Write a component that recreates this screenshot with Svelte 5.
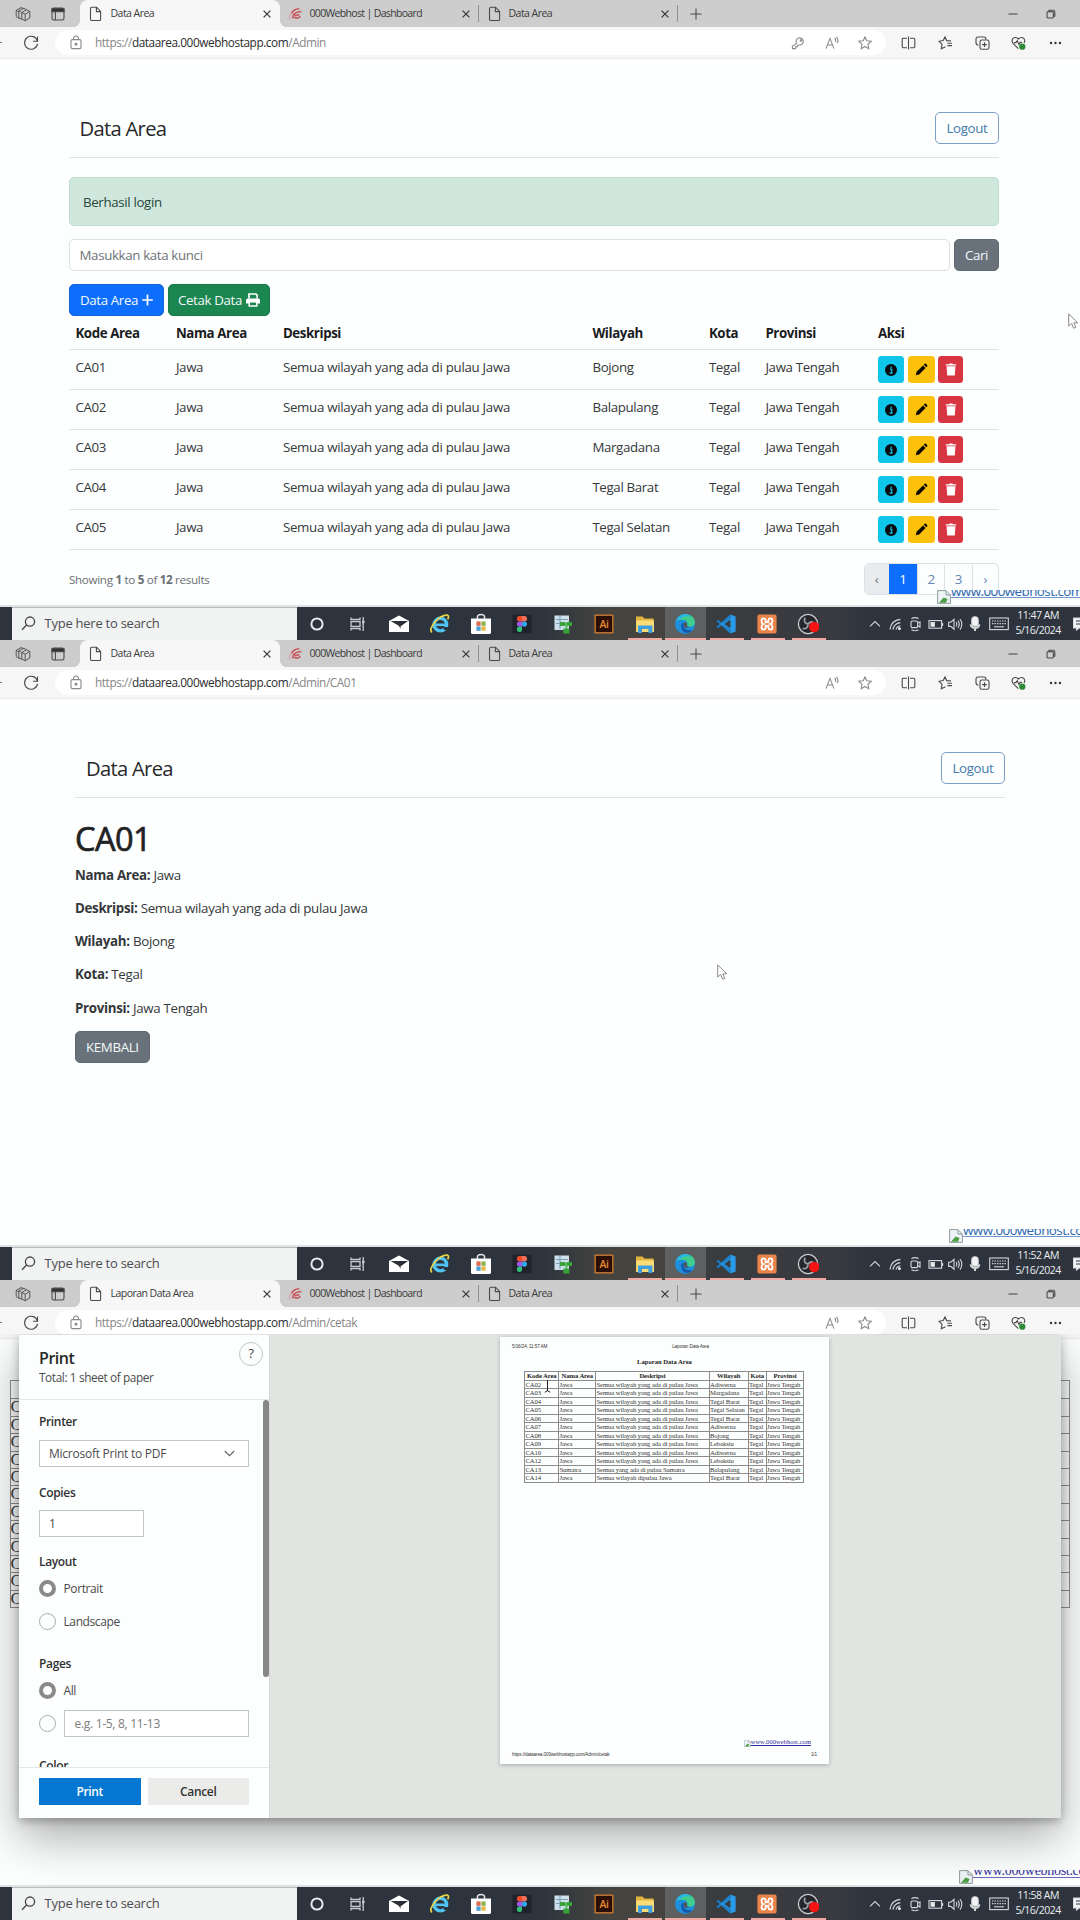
<script>
  const wilayah = ['Bojong', 'Balapulang', 'Margadana', 'Tegal Barat', 'Tegal Selatan'];
  const rows = wilayah.map((w, i) => ({ kode: 'CA0' + (i + 1), wilayah: w }));
  const desc = 'Semua wilayah yang ada di pulau Jawa';

  const details = [
    ['Nama Area:', 'Jawa'],
    ['Deskripsi:', desc],
    ['Wilayah:', 'Bojong'],
    ['Kota:', 'Tegal'],
    ['Provinsi:', 'Jawa Tengah']
  ];

  const report = [
    ['CA02', 'Jawa', desc, 'Adiwerna'],
    ['CA03', 'Jawa', desc, 'Margadana'],
    ['CA04', 'Jawa', desc, 'Tegal Barat'],
    ['CA05', 'Jawa', desc, 'Tegal Selatan'],
    ['CA06', 'Jawa', desc, 'Tegal Barat'],
    ['CA07', 'Jawa', desc, 'Adiwerna'],
    ['CA08', 'Jawa', desc, 'Bojong'],
    ['CA09', 'Jawa', desc, 'Lebaksiu'],
    ['CA10', 'Jawa', desc, 'Adiwerna'],
    ['CA12', 'Jawa', desc, 'Lebaksiu'],
    ['CA13', 'Sumatra', 'Semua yang ada di pulau Sumatra', 'Balapulang'],
    ['CA14', 'Jawa', 'Semua wilayah dipulau Jawa', 'Tegal Barat']
  ];

  const apps = [
    ['cortana', ''], ['taskview', ''], ['mail', ''], ['ie', ''], ['store', ''], ['figma', ''],
    ['sheet', ''], ['ai', ''], ['folder', 'open'], ['edge', 'open current'], ['code', 'open'],
    ['xampp', 'open'], ['obs', 'open']
  ];
  const tray = ['chevron', 'wifi', 'camera', 'battery', 'volume', 'mic'];
</script>

{#snippet doc()}
  <svg class="doc" width="13" height="16" viewBox="0 0 13 16"><path d="M1.5 2.5q0-1.3 1.3-1.3H7.6L11.6 5.4V13.2q0 1.3-1.3 1.3H2.8q-1.3 0-1.3-1.3ZM7.4 1.4V5.6H11.4" /></svg>
{/snippet}

{#snippet close()}
  <svg class="close" width="10" height="10" viewBox="0 0 10 10"><path d="M1.6 1.6L8.4 8.4M8.4 1.6L1.6 8.4" /></svg>
{/snippet}

{#snippet browser(title, path, withKey)}
  <header class="tabs">
    <div class="lead">
      <svg class="cubes" width="16" height="16" viewBox="0 0 16 16"><path d="M1.2 4.4V10.6L4.4 12.6M1.2 4.4L6 1.6L8.6 2.6M1.2 4.4L3.4 5.6M3.8 5V11.6L6.8 13.4M3.8 5L8.6 2.4L11.6 3.6M3.8 5L6.4 6.4M6.8 6.6V13L10.2 14.8L14.8 12V5.4L11.4 3.8ZM6.8 6.6L10.2 8.2L14.8 5.4M10.2 8.2V14.8" /></svg>
      <svg width="16" height="16" viewBox="0 0 16 16"><rect x="2" y="2" width="12" height="12" rx="1.8" /><path class="fill" d="M2 2.5H14V5.8H2Z" /><path d="M5.4 5V14" /></svg>
    </div>
    <div class="tab active">{@render doc()}<span>{title}</span>{@render close()}</div>
    <div class="tab host">
      <svg width="15" height="14" viewBox="0 0 15 14"><path class="red pale" d="M2.2 12.5Q.6 9 3 6.4" /><path class="red" d="M3.4 6.4Q5.4 2 11.4 1.8M4.6 11.4Q4.2 5.2 13.4 4.6M5.8 9.8Q8.8 12.8 12.4 9.4M6.4 7.8Q8 9.4 11.4 7.4" /></svg>
      <span>000Webhost | Dashboard</span>{@render close()}
    </div>
    <div class="tab">{@render doc()}<span>Data Area</span>{@render close()}</div>
    <svg class="plus" width="12" height="12" viewBox="0 0 12 12"><path d="M6 .5V11.5M.5 6H11.5" /></svg>
    <div class="window">
      <svg width="10" height="10" viewBox="0 0 10 10"><path d="M.5 5H9.5" /></svg>
      <svg width="10" height="10" viewBox="0 0 10 10"><rect x="1" y="2.6" width="6.4" height="6.4" rx="1.2" /><path d="M3 2.4V1.2H7.2Q8.8 1.2 8.8 2.8V7.2H7.6" /></svg>
    </div>
  </header>
  <div class="toolbar">
    <i class="back"></i>
    <svg width="18" height="18" viewBox="0 0 18 18"><path d="M15.4 7.2A6.5 6.5 0 1 0 15.5 9.8M15.5 2.6V7.2H11" /></svg>
    <div class="address">
      <svg width="12" height="15" viewBox="0 0 12 15"><rect x="1" y="4.6" width="10" height="9" rx="1.3" /><path d="M3.6 4.6V3.4a2.4 2.4 0 0 1 4.8 0V4.6" /><circle class="fill" cx="6" cy="9.2" r=".9" /></svg>
      <span class="url">https://<b>dataarea.000webhostapp.com</b>{path}</span>
      <div class="inpill">
        {#if withKey}
          <svg width="14" height="14" viewBox="0 0 14 14"><path d="M5.6 7.4A3.6 3.6 0 1 1 8 9L6.4 9.4V10.8H4.6V12.6H1.4V10.4Z" /><circle cx="9.9" cy="4.4" r=".7" /></svg>
        {/if}
        <svg width="14" height="14" viewBox="0 0 14 14"><path d="M1 12.6L5 2.4L9 12.6M2.4 9H7.6M9.6 2Q11.4 3.6 10.4 6M11.4 .8Q14 3.4 12.4 7" /></svg>
        <svg width="14" height="14" viewBox="0 0 14 14"><path d="M7 .9L8.8 4.8L13.2 5.3L10 8.3L10.8 12.7L7 10.5L3.2 12.7L4 8.3L.8 5.3L5.2 4.8Z" /></svg>
      </div>
    </div>
    <div class="actions">
      <svg width="15" height="14" viewBox="0 0 15 14"><path d="M6 2.2H2.4Q1.2 2.2 1.2 3.4V10.6Q1.2 11.8 2.4 11.8H6M9 2.2H12.6Q13.8 2.2 13.8 3.4V10.6Q13.8 11.8 12.6 11.8H9M7.5 .5V13.5" /></svg>
      <svg width="15" height="14" viewBox="0 0 15 14"><path d="M13 4.9L8.7 4.6L7 .9L5.2 4.6L1 5.3L4 8.3L3.3 12.7L7.4 10.7M9.4 7.2H14M9.4 9.6H14" /></svg>
      <svg width="15" height="14" viewBox="0 0 15 14"><path d="M11 3.4Q11 1 9 1H3Q1 1 1 3V6.4Q1 9 3.4 9" /><rect x="5" y="4" width="9" height="9.3" rx="1.8" /><path d="M9.5 6.2V11M7.1 8.6H11.9" /></svg>
      <svg width="15" height="14" viewBox="0 0 15 14"><path d="M7.4 12.6L2 7.3Q.2 4.8 1.8 2.7Q4.4 .2 7.4 3Q10.4 .2 13 2.7Q14.4 4.8 13 7M3 6.6H5L6.2 4.6L8 8.6L9.2 6.4H11" /><circle class="ok" cx="11.3" cy="10.7" r="3.1" /></svg>
      <svg width="15" height="14" viewBox="0 0 15 14"><g class="fill dots"><circle cx="3" cy="7" r="1.2" /><circle cx="7.5" cy="7" r="1.2" /><circle cx="12" cy="7" r="1.2" /></g></svg>
    </div>
  </div>
{/snippet}

{#snippet app(name)}
  <svg width="22" height="22" viewBox="0 0 22 22">
    {#if name === 'cortana'}
      <circle cx="11" cy="11" r="5.6" fill="none" stroke="#e6e8ea" stroke-width="2" />
    {:else if name === 'taskview'}
      <g fill="none" stroke="#c9ccd0" stroke-width="1.3"><path d="M4 4.5V6.5H13V4.5M4 17.5V15.5H13V17.5M16.2 4V18" /><rect x="4" y="8.6" width="9" height="4.8" /><path d="M15 9H17.6" stroke-width="2.4" /></g>
    {:else if name === 'mail'}
      <path d="M1 8L11 2.4L21 8V19H1Z" fill="#fff" /><path d="M2.6 8H20L12.4 13.4Q13 16 13.6 16.6L10.4 12.4Z" fill="#2b2f36" />
    {:else if name === 'ie'}
      <circle cx="11.4" cy="11.6" r="6.3" fill="none" stroke="#4fc3f3" stroke-width="3.4" /><path d="M7 11.8H19" stroke="#4fc3f3" stroke-width="2.6" /><path d="M14 14H20V17H15Z" fill="#2e343d" /><path d="M3 19.4Q-.4 17 6 9Q13 1.4 18.5 2.2Q20.4 3 18.6 6.4" fill="none" stroke="#e6d34a" stroke-width="1.7" />
    {:else if name === 'store'}
      <path d="M7.4 7V4.4Q7.4 1.4 11 1.4T14.6 4.4V7" fill="none" stroke="#dfe3e6" stroke-width="1.5" /><path d="M1 5.6H21V19.4Q21 21 19.4 21H2.6Q1 21 1 19.4Z" fill="#fff" /><path d="M6.4 8.4H10.6V12.8H6.4Z" fill="#e06a4c" /><path d="M11.4 8.4H15.6V12.8H11.4Z" fill="#8bb34a" /><path d="M6.4 13.4H10.6V17.8H6.4Z" fill="#4a9fdd" /><path d="M11.4 13.4H15.6V17.8H11.4Z" fill="#eab843" />
    {:else if name === 'figma'}
      <rect x="1.5" y="1.5" width="19" height="19" rx="2" fill="#20242a" /><path d="M11 3H8.6a2.7 2.7 0 0 0 0 5.4H11Z" fill="#ee4b2c" /><path d="M11 3H13.4a2.7 2.7 0 0 1 0 5.4H11Z" fill="#f0705c" /><path d="M11 8.4H8.6a2.7 2.7 0 0 0 0 5.4H11Z" fill="#9a5bea" /><circle cx="13.4" cy="11.1" r="2.6" fill="#35a9ee" /><path d="M11 13.8H8.8a2.6 2.6 0 1 0 2.2 2.6Z" fill="#2fbf76" />
    {:else if name === 'sheet'}
      <path d="M2.5 2.5H17V17H2.5Z" fill="#cfe0ea" /><path d="M4 6.5H16M4 10.5H12M8 3V16" stroke="#7ba3bb" stroke-width="1.2" /><path d="M8 9H13.4V13H8ZM14.6 9H20V13H14.6ZM11.4 15.6H17.4V20.6H11.4Z" fill="#37a23c" /><path d="M13 11H15M14.4 12V16" stroke="#52b955" stroke-width="2" />
    {:else if name === 'ai'}
      <rect x="2.2" y="2.2" width="17.6" height="17.6" fill="#2a0f06" stroke="#c8792f" stroke-width="1.4" /><text x="11" y="15" text-anchor="middle" fill="#e88b35" font-size="10.5" font-weight="600">Ai</text>
    {:else if name === 'folder'}
      <path d="M2 3.4H8.5L10.4 5.4H19.6V19H2Z" fill="#e3b33d" /><path d="M2.4 7.4H20V19H2.4Z" fill="#f9dd7b" /><path d="M4 12.6H18.4V20H14.4V16H8V20H4Z" fill="#3f9fe0" />
    {:else if name === 'edge'}
      <circle cx="11" cy="11" r="10" fill="#1f8fdc" /><path d="M2 8Q5 .8 12 1Q20.6 2 21 9.6Q20.6 14 16 13.6Q12 13.2 13.4 10.8Q13 7 8 6.8Q4 6.8 2 8Z" fill="#3fce8e" /><path d="M1.4 8.4Q4 1.6 11 1Q15 1.4 17.4 4Q9 1.6 6 6.6Q3.6 7 1.4 8.4Z" fill="#29b4e6" /><path d="M7.4 11Q6.4 16 10.6 19.6Q14.4 20.6 18.6 17.4Q13 18 10.6 15.4Q9 13 9.6 10Q8 10 7.4 11Z" fill="#1257a8" /><path d="M9.8 9.6Q12.6 8.6 13.2 11Q12.2 13.4 15 14.2Q11.4 15.6 10 13.4Z" fill="#525456" />
    {:else if name === 'code'}
      <path d="M15.4 1.4L20.6 3.6V18.4L15.4 20.6L5 11Z" fill="#2a9be8" /><path d="M15.4 6.4V15.6L9.4 11Z" fill="#3a3d42" /><path d="M1.4 8.2L3 6.8L16 17.2V20.4ZM1.4 13.8L3 15.2L16 4.8V1.6Z" fill="#1a7fc8" />
    {:else if name === 'xampp'}
      <rect x="1.4" y="1.4" width="19.2" height="19.2" rx="2" fill="#ea8448" /><path d="M5.6 8.4V7Q5.6 5.4 7.4 5.4Q9.6 5.4 9.6 7.4V9H12.4V7.4Q12.4 5.4 14.6 5.4Q16.4 5.4 16.4 7V8.4Q16.4 10.4 14.4 11Q16.4 11.6 16.4 13.6V15Q16.4 16.6 14.6 16.6Q12.4 16.6 12.4 14.6V13H9.6V14.6Q9.6 16.6 7.4 16.6Q5.6 16.6 5.6 15V13.6Q5.6 11.6 7.6 11Q5.6 10.4 5.6 8.4Z" fill="none" stroke="#fff" stroke-width="1.8" />
    {:else if name === 'obs'}
      <circle cx="11" cy="11" r="9.6" fill="#24262b" stroke="#c9cbce" stroke-width="1.3" /><path d="M11 11Q6 10 8 4.6M11 11Q14.6 7 17.6 11M11 11Q11 16.4 5.6 15.6" fill="none" stroke="#9b9da1" stroke-width="1.8" /><circle cx="17.2" cy="14" r="5.2" fill="#f81414" />
    {/if}
  </svg>
{/snippet}

{#snippet trayIcon(name)}
  <svg width="18" height="18" viewBox="0 0 18 18">
    {#if name === 'chevron'}
      <path d="M4 11.4L9 6.6L14 11.4" />
    {:else if name === 'wifi'}
      <path d="M4 14.6Q5 5.4 14.4 4.4M7 14.6Q7.8 8.6 14.4 7.6M10 14.6Q10.8 11.2 14.4 10.8" /><circle class="fill" cx="13.4" cy="13.6" r="1" />
    {:else if name === 'camera'}
      <rect x="5" y="6" width="6.6" height="6.6" rx="1" /><path d="M11.6 8L14 6.8V12L11.6 10.8M5.4 3.6Q9 1.6 12.6 3.6M5.4 14.8Q9 16.8 12.6 14.8" />
    {:else if name === 'battery'}
      <rect x="3" y="5.6" width="12.6" height="7.6" /><path class="fill" d="M5 7.6H8.4V11.2H5Z" /><path d="M16.6 8V11" />
    {:else if name === 'volume'}
      <path d="M2.6 7.2H4.8L8 4.4V14.2L4.8 11.4H2.6ZM10 7.2Q11.6 9.2 10 11.4M12 5.6Q14.6 9.2 12 13M14 4Q17.6 9.2 14 14.6" />
    {:else if name === 'mic'}
      <rect class="fill" x="5.8" y="1.8" width="6.4" height="9.4" rx="3" /><path d="M4.6 9.4Q5.2 13 9 13T13.4 9.4M9 13V16" stroke-width="2" />
    {/if}
  </svg>
{/snippet}

{#snippet broken(width)}
  <svg width={width} height={width} viewBox="0 0 14 14"><path d="M.6 .6H9L13.4 5V13.4H.6Z" fill="#eef3f5" stroke="#8f9a9d" /><path d="M2 12.8L6.6 7.6L10.6 9L9 12.8Z" fill="#4e9f45" /><path d="M9 .8V5H13.2" fill="none" stroke="#8f9a9d" /></svg>
{/snippet}

{#snippet taskbar(time)}
  <footer class="taskbar">
    <div class="search">
      <svg width="15" height="15" viewBox="0 0 15 15"><circle cx="9" cy="5.6" r="4.6" /><path d="M5.6 9L1 13.8" /></svg>
      <span>Type here to search</span>
    </div>
    {#each apps as [name, state]}
      <div class="app {state}">{@render app(name)}</div>
    {/each}
    <div class="tray">
      {#each tray as name}<span class="cell">{@render trayIcon(name)}</span>{/each}
      <svg class="keyboard" width="20" height="14" viewBox="0 0 20 14"><rect x=".7" y="1" width="18.6" height="11.6" /><path stroke-dasharray="1.4 1.1" d="M3 4H17.4M3 6.6H17.4" /><path d="M5 9.8H15" /></svg>
      <div class="clock"><span>{time}</span><span>5/16/2024</span></div>
      <svg class="notes" width="12" height="14" viewBox="0 0 12 14"><path class="fill" d="M.5 1H12V11H6L3.6 13V11H.5Z" /><path class="dark" d="M3 4H12M3 7H12" /></svg>
    </div>
  </footer>
{/snippet}

<main>
  <section class="frame">
    {@render browser('Data Area', '/Admin', true)}
    <div class="page list">
      <div class="head"><span class="brand">Data Area</span><button class="btn outline">Logout</button></div>
      <div class="alert">Berhasil login</div>
      <div class="find"><div class="keyword">Masukkan kata kunci</div><button class="btn gray">Cari</button></div>
      <div class="tools">
        <button class="btn blue">Data Area <svg width="11" height="12" viewBox="0 0 11 12"><path d="M5.5 .6V11.4M.2 6H10.8" stroke="#fff" stroke-width="1.7" /></svg></button>
        <button class="btn green">Cetak Data <svg width="14" height="14" viewBox="0 0 14 14"><path d="M3 5.4V1H10L11.2 2.4V5.4" fill="none" stroke="#fff" stroke-width="1.7" /><path d="M1.6 5.4H12.4Q14 5.4 14 7V10.6H0V7Q0 5.4 1.6 5.4Z" fill="#fff" /><rect x="3.2" y="8.8" width="7.6" height="4.2" fill="#1b8650" stroke="#fff" stroke-width="1.5" /></svg></button>
      </div>
      <div class="grid">
        <div class="tr th"><span>Kode Area</span><span>Nama Area</span><span>Deskripsi</span><span>Wilayah</span><span>Kota</span><span>Provinsi</span><span>Aksi</span></div>
        {#each rows as r}
          <div class="tr">
            <span>{r.kode}</span><span>Jawa</span><span class="desc">{desc}</span><span>{r.wilayah}</span><span>Tegal</span><span>Jawa Tengah</span>
            <div class="acts">
              <i class="info"><svg width="12" height="12" viewBox="0 0 12 12"><circle cx="6" cy="6" r="6" fill="#05090b" /><path d="M5 5.2H6.6V9M4.6 9H7.6M6.1 2.4V4" fill="none" stroke="#12b6d6" stroke-width="1.4" /></svg></i>
              <i class="edit"><svg width="13" height="13" viewBox="0 0 13 13"><path d="M.8 12.2L1.6 8.8L8 2.4L10.6 5L4.2 11.4ZM8.7 1.7L9.6 .8Q10.4 .2 11.2 .9L12.1 1.8Q12.8 2.6 12.1 3.4L11.3 4.3Z" fill="#0d0b00" /></svg></i>
              <i class="del"><svg width="12" height="13" viewBox="0 0 12 13"><path d="M.8 1.2H4L4.6 .4H7.4L8 1.2H11.2V2.4H.8ZM1.6 3.2H10.4L9.8 12.6H2.2Z" fill="#fff" /></svg></i>
            </div>
          </div>
        {/each}
      </div>
      <div class="foot">
        <span>Showing <b>1</b> to <b>5</b> of <b>12</b> results</span>
        <div class="pages"><i class="off">‹</i><i class="on">1</i><i>2</i><i>3</i><i class="next">›</i></div>
      </div>
      <svg class="pointer p1" width="11" height="17" viewBox="0 0 11 17"><path d="M.7 .9V13L3.6 10.4L5.6 15.2L7.8 14.3L5.8 9.8H9.8Z" /></svg>
      <div class="mark m1">{@render broken(14)}<div class="clip"><span>www.000webhost.com</span></div></div>
    </div>
    {@render taskbar('11:47 AM')}
  </section>

  <section class="frame">
    {@render browser('Data Area', '/Admin/CA01', false)}
    <div class="page detail">
      <div class="head"><span class="brand">Data Area</span><button class="btn outline">Logout</button></div>
      <h1>CA01</h1>
      {#each details as [k, v]}<p><b>{k}</b> {v}</p>{/each}
      <button class="btn gray">KEMBALI</button>
      <svg class="pointer p2" width="11" height="17" viewBox="0 0 11 17"><path d="M.7 .9V13L3.6 10.4L5.6 15.2L7.8 14.3L5.8 9.8H9.8Z" /></svg>
      <div class="mark m2">{@render broken(14)}<div class="clip"><span>www.000webhost.com</span></div></div>
    </div>
    {@render taskbar('11:52 AM')}
  </section>

  <section class="frame">
    {@render browser('Laporan Data Area', '/Admin/cetak', false)}
    <div class="page print">
      <div class="under"><div></div>{#each report as r}<div>C</div>{/each}</div>
      <div class="mark m3">{@render broken(14)}<div class="clip"><span>www.000webhost.com</span></div></div>
      <div class="dialog">
        <aside>
          <div class="top">
            <div><h2>Print</h2><small>Total: 1 sheet of paper</small></div>
            <span class="help">?</span>
          </div>
          <div class="scroll">
            <div class="form">
              <h3>Printer</h3>
              <div class="box select">Microsoft Print to PDF<svg width="11" height="7" viewBox="0 0 11 7"><path d="M.8 1L5.5 5.6L10.2 1" /></svg></div>
              <h3>Copies</h3>
              <div class="box copies">1</div>
              <h3>Layout</h3>
              <div class="opt"><i class="radio sel"></i>Portrait</div>
              <div class="opt land"><i class="radio"></i>Landscape</div>
              <h3>Pages</h3>
              <div class="opt"><i class="radio sel"></i>All</div>
              <div class="opt range"><i class="radio"></i><div class="box hint">e.g. 1-5, 8, 11-13</div></div>
              <h3>Color</h3>
            </div>
            <div class="bar"></div>
          </div>
          <div class="buttons"><button class="go">Print</button><button>Cancel</button></div>
        </aside>
        <div class="preview">
          <div class="sheet">
            <div class="tiny"><span>5/16/24, 11:57 AM</span><span class="mid">Laporan Data Area</span></div>
            <h4>Laporan Data Area</h4>
            <div class="report">
              <div class="rr rh"><b>Kode Area</b><b>Nama Area</b><b>Deskripsi</b><b>Wilayah</b><b>Kota</b><b>Provinsi</b></div>
              {#each report as r}
                <div class="rr"><span>{r[0]}</span><span>{r[1]}</span><span>{r[2]}</span><span>{r[3]}</span><span>Tegal</span><span>Jawa Tengah</span></div>
              {/each}
            </div>
            <svg class="ibeam" width="7" height="14" viewBox="0 0 7 14"><path d="M3.5 1V12M.8 13.2Q3.5 12.6 3.5 11Q3.5 12.6 6.2 13.2" /></svg>
            <div class="minimark">{@render broken(7)}<span>www.000webhost.com</span></div>
            <div class="tiny last"><span>https://dataarea.000webhostapp.com/Admin/cetak</span><span>1/1</span></div>
          </div>
        </div>
      </div>
    </div>
    {@render taskbar('11:58 AM')}
  </section>
</main>

<style>
  :global(body) { margin: 0; background: #fdfefe; }
  main { width: 1080px; font-family: 'Open Sans', 'Noto Sans', sans-serif; font-size: 13.3px; letter-spacing: -0.35px; color: #34383b; }
  svg { flex: none; display: block; }
  b { font-weight: 700; }
  i { font-style: normal; }
  .frame { height: 640px; display: flex; flex-direction: column; overflow: hidden; }

  .tabs { height: 27px; flex: none; display: flex; background: #cdcdcd; font-size: 10.5px; letter-spacing: -0.53px; color: #3a3a3a; align-items: stretch; }
  .tabs svg, .toolbar svg { fill: none; stroke: #4a4a4a; stroke-width: 1.1; }
  .tabs .cubes { stroke-width: .9; }
  .tabs .fill, .toolbar .fill { fill: #333; }
  .toolbar .dots { stroke: none; }
  .lead { width: 80px; box-sizing: border-box; padding-left: 14.5px; display: flex; gap: 19px; align-items: center; }
  .tab { width: 199px; box-sizing: border-box; padding: 0 8px 0 9px; display: flex; align-items: center; position: relative; }
  .tab span { flex: 1; margin-left: 7.5px; white-space: nowrap; padding-bottom: 1px; }
  .tab.active { width: 200px; background: #f7f7f7; border-radius: 8px 8px 0 0; }
  .tab.active span { margin-left: 8.5px; }
  .tab.active::before, .tab.active::after { content: ''; position: absolute; bottom: 0; width: 6px; height: 6px; }
  .tab.active::before { left: -6px; background: radial-gradient(circle at 0 0, transparent 5.5px, #f7f7f7 6px); }
  .tab.active::after { right: -6px; background: radial-gradient(circle at 100% 0, transparent 5.5px, #f7f7f7 6px); }
  .tab.host { padding-left: 8px; letter-spacing: -0.66px; }
  .tab.host span { margin-left: 6.5px; }
  .tab:not(.active)::after { content: ''; position: absolute; right: 0; top: 5px; width: 1px; height: 17px; background: #8f8f8f; }
  .tabs .red { stroke: #c9535c; stroke-width: 1.5; }
  .tabs .pale { stroke: #d99a9e; stroke-width: 1.1; }
  .close path { stroke: #3c3c3c; stroke-width: 1.3; }
  .plus { margin-left: 12px; align-self: center; }
  .window { margin-left: auto; display: flex; gap: 28px; align-items: center; padding-right: 24px; }

  .toolbar { height: 32px; flex: none; background: #f6f6f6; border-bottom: 1px solid #e9eaea; display: flex; align-items: center; box-sizing: border-box; }
  .back { width: 2px; height: 1px; background: #777; margin-right: 20px; }
  .address { margin-left: 15px; width: 831px; height: 25px; box-sizing: border-box; border-radius: 13px; background: #fff; display: flex; align-items: center; padding: 0 14px 0 15px; }
  .address svg { stroke: #8a8a8a; stroke-width: 1.1; }
  .url { margin-left: 13px; padding-bottom: 1px; font-size: 11.8px; letter-spacing: -0.42px; color: #858585; }
  .url b { font-weight: 400; color: #2c2c2c; }
  .inpill { margin-left: auto; display: flex; gap: 19.5px; }
  .inpill svg { stroke: #8a8a8a; }
  .actions { display: flex; gap: 21.8px; margin-left: 15px; }
  .toolbar .ok { fill: #2e8b35; stroke: none; }

  .page { flex: 1; position: relative; background: #fdfefe; box-sizing: border-box; border-bottom: 2px solid #e0e3e4; overflow: hidden; }
  .list { padding: 53px 81px 0 69px; }
  .detail { padding: 53px 75px 0 75px; }
  .head { height: 44.5px; border-bottom: 1px solid #dfe3e5; display: flex; justify-content: space-between; align-items: flex-start; padding-left: 10.5px; }
  .detail .head { padding-left: 11px; }
  .brand { font-size: 20.2px; line-height: 33px; letter-spacing: -0.7px; color: #26292b; }
  .btn { font: inherit; letter-spacing: inherit; height: 32px; box-sizing: border-box; border: 1px solid transparent; border-radius: 5px; padding: 0 10px; color: #f4f8fa; display: inline-flex; align-items: center; justify-content: center; gap: 4px; white-space: nowrap; }
  .btn.outline { width: 64px; background: transparent; border-color: #7c9dc6; color: #4379ab; }
  .btn.gray { background: #69727a; border-color: #5f6b74; }
  .btn.blue { width: 95px; background: #0d6efd; border-color: #1462d4; }
  .btn.green { width: 102px; background: #1b8650; border-color: #1b7849; }
  .alert { margin-top: 19.5px; height: 49px; box-sizing: border-box; border: 1px solid #bcdccd; border-radius: 5px; background: #cfe7dc; line-height: 48px; padding-left: 13px; color: #27483a; }
  .find { margin-top: 13px; display: flex; gap: 4px; }
  .keyword { flex: 1; height: 32px; box-sizing: border-box; border: 1px solid #dde1e4; border-radius: 5px; line-height: 30px; padding-left: 9.5px; color: #6e7376; background: #fff; }
  .find .btn { width: 45px; }
  .tools { margin-top: 13px; display: flex; gap: 4px; }
  .tr { display: grid; grid-template-columns: 100.5px 107px 309.5px 116.5px 56.5px 112.5px 1fr; padding-left: 6.4px; height: 40.05px; box-sizing: border-box; border-bottom: 1px solid #dfe2e5; line-height: 34.6px; white-space: nowrap; }
  .tr.th { height: 33.6px; line-height: 34px; font-weight: 700; color: #191c1e; letter-spacing: -0.4px; }
  .desc { letter-spacing: -0.29px; }
  .acts { display: flex; gap: 4px; padding-top: 6.5px; }
  .acts i { width: 26.5px; height: 27px; border-radius: 3.5px; display: flex; align-items: center; justify-content: center; }
  .info { background: #10c5ea; }
  .edit { background: #fdc00b; }
  .acts .del { background: #d83543; width: 24.5px; margin-left: -.5px; }
  .foot { display: flex; justify-content: space-between; margin-top: 13px; font-size: 11.6px; color: #6a7076; letter-spacing: -0.3px; line-height: 34px; }
  .pages { display: flex; height: 32px; box-sizing: border-box; border: 1px solid #dee2e6; border-radius: 5px; overflow: hidden; line-height: 30px; font-size: 13.3px; color: #5f86b5; }
  .pages i { width: 27.2px; box-sizing: border-box; text-align: center; border-left: 1px solid #dee2e6; }
  .pages .off { width: 24px; background: #e9ecef; border: 0; color: #6c757d; }
  .pages .on { width: 28.5px; background: #0d6efd; color: #fff; border-left: 0; }
  .pages .next { width: 26.5px; }
  .pointer { position: absolute; fill: #fff; stroke: #8b8b8b; stroke-width: 1; }
  .p1 { left: 1068px; top: 254px; }
  .p2 { left: 717px; top: 265px; }
  .mark { position: absolute; top: 531px; display: flex; font-size: 13.4px; color: #2c67b0; letter-spacing: -0.55px; }
  .mark .clip { height: 8px; overflow: hidden; border-bottom: 1px solid #6f97cd; box-sizing: border-box; }
  .mark span { display: block; line-height: 20px; margin-top: -9.5px; white-space: nowrap; }
  .m1 { left: 937px; }
  .m2 { left: 949px; top: 530px; }
  .m3 { left: 959px; color: #33319b; font: 14px 'Liberation Serif', serif; letter-spacing: -0.3px; }
  .m3 .clip { border-color: #6a68b8; }

  h1 { margin: 20px 0 6px; font-size: 32.5px; line-height: 41px; font-weight: 400; -webkit-text-stroke: .7px #1f2224; letter-spacing: -0.5px; color: #1f2224; }
  p { margin: 0 0 13.3px; line-height: 20px; letter-spacing: -0.3px; }

  .taskbar { height: 33px; flex: none; display: flex; background: linear-gradient(90deg, #2d343e 50%, #45443f 56%, #44433f 62%, #3a3c40 66%, #383a3f 77%, #2d343e 81%); }
  .search { flex: none; margin-left: 11.5px; width: 285.5px; box-sizing: border-box; background: #f1f2f2; border-top: 1px solid #b9bdbf; display: flex; align-items: center; gap: 9px; padding: 0 0 1.5px 9px; font-size: 13px; color: #4b4e50; letter-spacing: -0.25px; }
  .search svg { fill: none; stroke: #444; stroke-width: 1.3; }
  .app { flex: none; width: 40.9px; display: flex; align-items: center; justify-content: center; position: relative; }
  .app.open::after { content: ''; position: absolute; left: 4px; right: 3px; bottom: 0; height: 2px; background: #f0aaa3; }
  .app.current { background: #5e5f60; }
  .app.current::after { left: 0; right: 0; }
  .tray { flex: none; margin-left: 36px; display: flex; align-items: center; }
  .tray svg { fill: none; stroke: #d6d9dc; stroke-width: 1.1; }
  .tray .fill { fill: #f2f3f4; }
  .tray .dark { stroke: #2d343e; }
  .cell { width: 20px; display: flex; justify-content: center; }
  .keyboard { margin: 0 4px; }
  .clock { width: 51px; display: flex; flex-direction: column; align-items: center; font-size: 10.5px; line-height: 15px; color: #eceef0; letter-spacing: -0.5px; white-space: nowrap; padding-bottom: 2px; }
  .notes { margin-left: 9px; }

  .under { position: absolute; left: 9.5px; top: 41px; width: 1060px; border: 1px solid #8f9191; box-sizing: border-box; font: 17px/16.4px 'Liberation Serif', serif; color: #3d3d3d; }
  .under div { height: 17.4px; box-sizing: border-box; border-top: 1px solid #8f9191; padding-left: 0; letter-spacing: 0; }
  .under div:first-child { border: 0; }
  .print { z-index: 0; overflow: visible; clip-path: inset(-5px 0 0 0); }
  .dialog { position: absolute; left: 19px; top: -4px; width: 1042px; height: 483px; display: flex; background: #e1e4e1; box-shadow: 0 20px 44px rgba(0, 0, 0, .32), 0 3px 9px rgba(0, 0, 0, .28); }
  aside { width: 250px; background: #fdfefe; display: flex; flex-direction: column; font-size: 12px; letter-spacing: -0.25px; color: #4a4c4d; }
  .top { height: 65px; box-sizing: border-box; border-bottom: 1px solid #e6e7e7; display: flex; justify-content: space-between; padding: 7px 6px 0 20px; }
  h2 { margin: 5px 0 0; font-size: 16px; line-height: 22px; font-weight: 600; color: #26282a; letter-spacing: -0.45px; }
  small { display: block; font-size: 11.8px; line-height: 17px; white-space: nowrap; letter-spacing: -0.38px; }
  .help { width: 24px; height: 24px; box-sizing: border-box; border: 1px solid #c2c3c3; border-radius: 50%; text-align: center; line-height: 21px; font-size: 13.5px; }
  .scroll { flex: 1; min-height: 0; display: flex; overflow: hidden; }
  .form { flex: 1; padding: 13px 14px 0 20px; }
  h3 { margin: 0; font-size: 12px; line-height: 17px; font-weight: 600; color: #303234; letter-spacing: -0.35px; }
  .box { height: 27px; box-sizing: border-box; border: 1px solid #c3c5c5; line-height: 25px; padding: 0 13px 0 9px; background: #fff; }
  .select { margin: 10px 0 16.5px; display: flex; justify-content: space-between; align-items: center; }
  .select svg { fill: none; stroke: #666; stroke-width: 1.2; }
  .copies { width: 105px; margin: 9px 0 16.5px; }
  .opt { display: flex; align-items: center; gap: 7.5px; height: 17px; margin-top: 10px; letter-spacing: -0.4px; }
  .radio { width: 17px; height: 17px; box-sizing: border-box; border: 1px solid #a9abab; border-radius: 50%; flex: none; }
  .radio.sel { border: 4.5px solid #8a8a8a; }
  .opt.land { margin: 16px 0 25px; }
  .opt.range { height: 27px; margin: 11px 0 19.5px; }
  .hint { flex: 1; color: #7b7d7d; letter-spacing: -0.3px; padding-left: 10px; }
  .bar { width: 6px; height: 277px; border-radius: 3px; background: #878787; }
  .buttons { height: 51px; box-sizing: border-box; border-top: 1px solid #e6e7e7; display: flex; gap: 7px; padding: 10px 20px 0 20px; }
  .buttons button { flex: 1; height: 27px; border: 0; background: #ebecea; font: 600 12px 'Open Sans', sans-serif; letter-spacing: -0.35px; color: #333; }
  .buttons .go { background: #0477d2; color: #fff; }

  .preview { flex: 1; border-left: 1px solid #d8dad8; box-sizing: border-box; }
  .sheet { position: relative; width: 329px; height: 427px; margin: 2px 0 0 230px; background: #fdfefe; box-shadow: 0 1px 4px rgba(0, 0, 0, .25); box-sizing: border-box; padding: 6px 12px 6px; display: flex; flex-direction: column; }
  .tiny { display: flex; justify-content: space-between; font: 4.6px/7px 'Liberation Sans', sans-serif; letter-spacing: -.1px; color: #333; white-space: nowrap; }
  .tiny .mid { margin-right: 108px; }
  h4 { margin: 7px 0 0; text-align: center; font: 700 6.6px/10px 'Liberation Serif', serif; letter-spacing: 0; color: #222; }
  .report { margin: 4px 13px 0 12px; border: 1px solid #8c8c8c; border-width: 1px 0 0 1px; font: 6.6px/7.5px 'Liberation Serif', serif; letter-spacing: -0.06px; color: #333; }
  .rr { display: grid; grid-template-columns: 34px 37px 113.5px 39px 18px 1fr; height: 8.5px; white-space: nowrap; }
  .rr > * { border: solid #8c8c8c; border-width: 0 1px 1px 0; box-sizing: border-box; overflow: visible; padding-left: .5px; }
  .rh { text-align: center; color: #1c1c1c; }
  .ibeam { position: absolute; left: 44px; top: 42px; fill: none; stroke: #222; stroke-width: 1; }
  .minimark { margin: auto 6px 4px auto; display: flex; font: 6.4px/6px 'Liberation Serif', serif; letter-spacing: 0.1px; color: #2b2a9c; text-decoration: underline; }
  .minimark span { height: 5px; margin-top: -1px; }
</style>
